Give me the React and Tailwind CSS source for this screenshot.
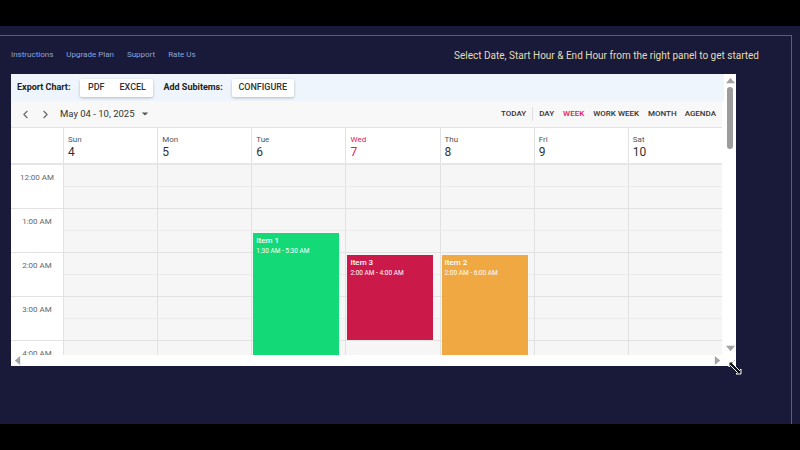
import { ChevronLeft, ChevronRight } from "lucide-react";

const days = [
  { name: "Sun", num: 4 },
  { name: "Mon", num: 5 },
  { name: "Tue", num: 6 },
  { name: "Wed", num: 7, today: true },
  { name: "Thu", num: 8 },
  { name: "Fri", num: 9 },
  { name: "Sat", num: 10 },
];

const events = [
  { day: 2, title: "Item 1", time: "1:30 AM - 5:30 AM", top: 68, height: 176, color: "bg-[#13d977]" },
  { day: 3, title: "Item 3", time: "2:00 AM - 4:00 AM", top: 90, height: 85, color: "bg-[#cb1a4a]" },
  { day: 4, title: "Item 2", time: "2:00 AM - 6:00 AM", top: 90, height: 176, color: "bg-[#f0a843]" },
];

const hours = ["12:00 AM", "1:00 AM", "2:00 AM", "3:00 AM", "4:00 AM"];

const Triangle = ({ dir }) => {
  const pts = {
    up: "0,8 5,2 10,8",
    down: "0,2 5,8 10,2",
    left: "8,0 2,5 8,10",
    right: "2,0 8,5 2,10",
  };
  return (
    <svg width="9" height="9" viewBox="0 0 10 10">
      <polygon points={pts[dir]} fill="#a3a3a3" />
    </svg>
  );
};

export default function App() {
  return (
    <div
      className="w-[800px] h-[450px] bg-black flex flex-col overflow-hidden"
      style={{ fontFamily: "Roboto, 'Liberation Sans', sans-serif" }}
    >
      <div className="h-[26px] shrink-0" />
      <div className="h-[398px] shrink-0 bg-[#19193a] pt-[9px]">
        <div className="w-[792px] h-full border-t border-r border-[#5d5d78] px-[11px]">
          {/* top links */}
          <div className="h-[18px] mt-[10px] flex items-center justify-between pr-[21px]">
            <div className="flex gap-[13px] text-[8px] text-[#8ca5d8]">
              <span>Instructions</span>
              <span>Upgrade Plan</span>
              <span>Support</span>
              <span>Rate Us</span>
            </div>
            <span className="text-[10px] text-[#e3dcb3]">
              Select Date, Start Hour &amp; End Hour from the right panel to get started
            </span>
          </div>

          {/* scheduler widget */}
          <div className="relative mt-[10px] w-[725px] h-[292px] bg-white grid grid-cols-[713px_12px] grid-rows-[281px_11px]">
            <div className="overflow-hidden flex flex-col">
              {/* export toolbar */}
              <div className="h-[27px] shrink-0 bg-[#eef5fc] flex items-center pl-[6px] pt-[1px] text-[9px] text-[#222]">
                <span className="font-bold">Export Chart:</span>
                <div className="ml-[10px] w-[73px] h-[18px] bg-white shadow-[0_1px_3px_rgba(0,0,0,0.25)] rounded-[2px] flex items-center justify-around text-[#333] font-medium">
                  <span>PDF</span>
                  <span>EXCEL</span>
                </div>
                <span className="ml-[10px] font-bold">Add Subitems:</span>
                <div className="ml-[9px] w-[62px] h-[18px] bg-white shadow-[0_1px_3px_rgba(0,0,0,0.25)] rounded-[2px] flex items-center justify-center text-[#333] font-medium">
                  CONFIGURE
                </div>
              </div>

              <div className="w-[711px] flex flex-col flex-1 min-h-0">
                {/* nav row */}
                <div className="h-[27px] shrink-0 bg-[#f8f8f8] border-b border-[#e2e2e2] flex items-center pl-[8px] pr-[6px]">
                  <ChevronLeft size={13} strokeWidth={2} className="text-[#666]" />
                  <ChevronRight size={13} strokeWidth={2} className="text-[#666] ml-[7px]" />
                  <span className="ml-[8px] text-[9.5px] text-[#333]">May 04 - 10, 2025</span>
                  <svg width="8" height="8" viewBox="0 0 10 10" className="ml-[6px]">
                    <polygon points="1,3 5,7 9,3" fill="#555" />
                  </svg>
                  <div className="ml-auto flex items-center text-[8px] font-medium text-[#333]">
                    <span>TODAY</span>
                    <span className="mx-[6px] w-px h-[14px] bg-[#ddd]" />
                    <span>DAY</span>
                    <span className="ml-[9px] text-[#e3165b]">WEEK</span>
                    <span className="ml-[9px]">WORK WEEK</span>
                    <span className="ml-[9px]">MONTH</span>
                    <span className="ml-[8px]">AGENDA</span>
                  </div>
                </div>

                {/* day header */}
                <div className="h-[37px] shrink-0 grid grid-cols-[52px_repeat(7,1fr)] bg-white border-b-2 border-[#e6e6e6]">
                  <div />
                  {days.map((d) => (
                    <div key={d.name} className="border-l border-[#e2e2e2] pl-[4px] pt-[8px] leading-none">
                      <div className={`text-[8px] ${d.today ? "text-[#e3165b]" : "text-[#555]"}`}>{d.name}</div>
                      <div className={`mt-[2px] text-[12px] ${d.today ? "text-[#e3165b]" : "text-[#333]"}`}>{d.num}</div>
                    </div>
                  ))}
                </div>

                {/* body */}
                <div className="flex-1 min-h-0 overflow-hidden grid grid-cols-[52px_repeat(7,1fr)]">
                  <div className="bg-white">
                    {hours.map((h) => (
                      <div key={h} className="h-[44px] border-b border-[#e2e2e2] text-[8px] text-[#666] text-center pt-[7px]">
                        {h}
                      </div>
                    ))}
                  </div>
                  {days.map((d, i) => (
                    <div key={d.name} className="relative border-l border-[#e2e2e2] bg-[#f6f6f6]">
                      {hours.map((h) => (
                        <div key={h} className="h-[44px] border-b border-[#e2e2e2]">
                          <div className="h-[22px] border-b border-[#ececec]" />
                        </div>
                      ))}
                      {events
                        .filter((e) => e.day === i)
                        .map((e) => (
                          <div
                            key={e.title}
                            className={`absolute left-[1px] w-[86px] ${e.color} text-white px-[3px] pt-[3px] leading-tight`}
                            style={{ top: e.top, height: e.height }}
                          >
                            <div className="text-[8px] font-medium">{e.title}</div>
                            <div className="text-[6.5px] mt-[1px]">{e.time}</div>
                          </div>
                        ))}
                    </div>
                  ))}
                </div>
              </div>
            </div>

            {/* vertical scrollbar */}
            <div className="flex flex-col items-center justify-between py-[2px]">
              <Triangle dir="up" />
              <div className="w-[6px] h-[62px] mt-[2px] rounded-full bg-[#9c9c9c]" />
              <div className="flex-1" />
              <Triangle dir="down" />
            </div>

            {/* horizontal scrollbar */}
            <div className="flex items-center justify-between px-[2px]">
              <Triangle dir="left" />
              <Triangle dir="right" />
            </div>
            <div className="flex items-end justify-end">
              <svg width="8" height="8" viewBox="0 0 8 8">
                <line x1="2" y1="7" x2="7" y2="2" stroke="#aaa" strokeWidth="1" />
              </svg>
            </div>

            {/* resize cursor */}
            <svg width="16" height="16" viewBox="0 0 16 16" className="absolute left-[716px] top-[286px]">
              <path d="M2 2 L7 2 L5.5 3.5 L12.5 10.5 L14 9 L14 14 L9 14 L10.5 12.5 L3.5 5.5 L2 7 Z" fill="#111" stroke="#fff" strokeWidth="1" />
            </svg>
          </div>
        </div>
      </div>
    </div>
  );
}
